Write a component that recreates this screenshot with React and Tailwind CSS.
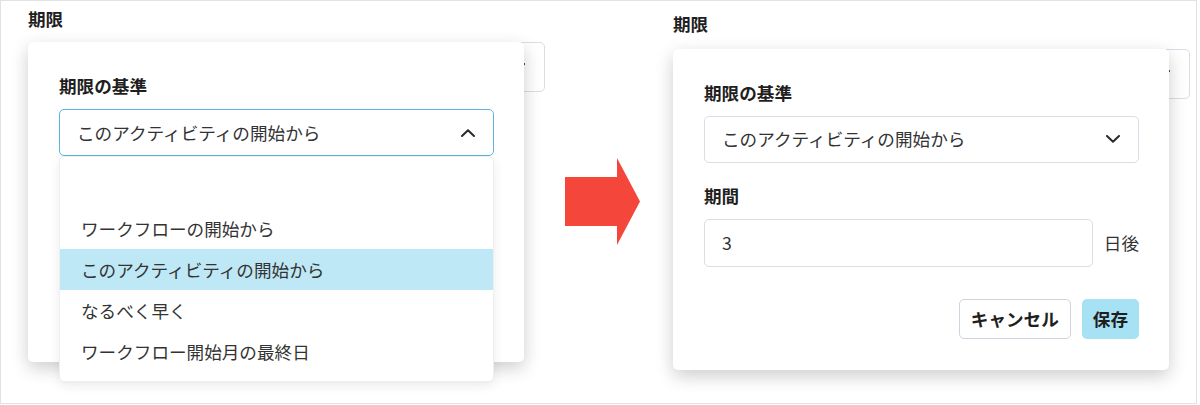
const FONT = "font-['Noto_Sans_CJK_JP','Noto_Sans',sans-serif]";

const OPTIONS = ['', 'ワークフローの開始から', 'このアクティビティの開始から', 'なるべく早く', 'ワークフロー開始月の最終日'];

function Chevron({ up = false }) {
  return (
    <svg width="14" height="8" viewBox="0 0 14 8" fill="none" className="shrink-0">
      <path
        d={up ? 'M1 7L7 1.2L13 7' : 'M1 1L7 6.8L13 1'}
        stroke="#2b2b2b"
        strokeWidth="2"
        strokeLinecap="round"
        strokeLinejoin="round"
      />
    </svg>
  );
}

function DeadlineCard({ open }) {
  return (
    <div className="absolute top-0 left-0 w-[496px] bg-white rounded-[5px] shadow-[0_6px_18px_rgba(0,0,0,0.2)] pt-[32px] pl-[31px] pr-[30px] pb-[31px]">
      <div className="h-[24px] leading-[24px] font-bold text-[#1f1f1f]">期限の基準</div>
      <div className="relative mt-[11px]">
        <div
          className={
            'h-[47px] rounded-[5px] border flex items-center justify-between pl-[17px] pr-[18px] text-[#333] ' +
            (open ? 'border-[#5db5de]' : 'border-[#dddbe6]')
          }
        >
          <span>このアクティビティの開始から</span>
          <Chevron up={open} />
        </div>
        {open && (
          <div className="absolute top-full left-0 right-0 z-10 bg-white border border-[#efefef] rounded-[5px] shadow-[0_4px_12px_rgba(0,0,0,0.08)] pt-[10px] pb-[9px]">
            {OPTIONS.map((o, i) => (
              <div
                key={i}
                className={
                  'h-[41px] flex items-center pl-[21px] text-[#333] ' + (i === 2 ? 'bg-[#bfe8f6]' : '')
                }
              >
                {o}
              </div>
            ))}
          </div>
        )}
      </div>
      {!open && (
        <>
          <div className="mt-[21px] h-[24px] leading-[24px] font-bold text-[#1f1f1f]">期間</div>
          <div className="mt-[11px] flex items-center gap-[11px]">
            <div className="flex-1 h-[48px] rounded-[5px] border border-[#dddbe6] flex items-center pl-[17px] text-[#333]">
              3
            </div>
            <span className="text-[#333]">日後</span>
          </div>
          <div className="mt-[32px] flex justify-end gap-[11px]">
            <button className="h-[40px] px-[11px] rounded-[5px] border border-[#d3d1de] bg-white font-bold text-[#1f1f1f]">
              キャンセル
            </button>
            <button className="h-[40px] px-[11px] rounded-[5px] bg-[#a6e1f4] font-bold text-[#1f1f1f]">保存</button>
          </div>
        </>
      )}
      {/* the open list covers the rest of the form, keep the card height */}
      {open && <div className="h-[175px]" />}
    </div>
  );
}

function Panel({ open, className, gap }) {
  return (
    <div className={'w-[517px] shrink-0 ' + className}>
      <div className="h-[24px] leading-[24px] font-bold text-[#1f1f1f]">期限</div>
      <div className={'relative ' + gap}>
        <div className="h-[50px] rounded-[5px] border border-[#dddbe6] flex items-center justify-end pr-[19px]">
          <Chevron />
        </div>
        <DeadlineCard open={open} />
      </div>
    </div>
  );
}

export default function App() {
  return (
    <div
      className={
        'w-[1197px] h-[404px] border border-[#e2e2e2] bg-white flex items-start overflow-hidden text-[17.6px] leading-[24px] ' +
        FONT
      }
    >
      <Panel open className="ml-[27px] pt-[6px]" gap="mt-[11px]" />
      <svg width="75" height="87" viewBox="0 0 75 87" className="shrink-0 ml-[20px] mt-[157px]">
        <polygon points="0,19 52,19 52,0 75,43.5 52,87 52,68 0,68" fill="#f4463a" />
      </svg>
      <Panel className="ml-[33px] pt-[11px]" gap="mt-[12.5px]" />
    </div>
  );
}
